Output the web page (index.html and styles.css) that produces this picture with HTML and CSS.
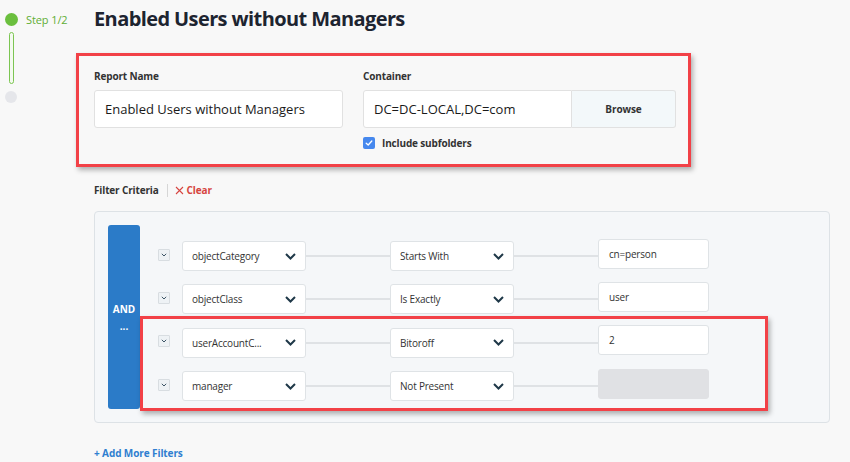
FILE: index.html
```html
<!DOCTYPE html>
<html>
<head>
<meta charset="utf-8">
<link rel="stylesheet" href="styles.css">
</head>
<body>
<div class="page">
  <aside class="stepper">
    <div class="step-row">
      <span class="dot dot-active"></span>
      <span class="step-label">Step 1/2</span>
    </div>
    <div class="step-bar"></div>
    <span class="dot dot-idle"></span>
  </aside>
  <main class="main">
    <h1 class="title">Enabled Users without Managers</h1>

    <section class="report-box">
      <div class="field field-name">
        <label class="label">Report Name</label>
        <div class="input">Enabled Users without Managers</div>
      </div>
      <div class="field field-container">
        <label class="label">Container</label>
        <div class="input-group">
          <div class="input input-grow">DC=DC-LOCAL,DC=com</div>
          <div class="browse">Browse</div>
        </div>
        <div class="check-row">
          <span class="checkbox">
            <svg width="8" height="8" viewBox="0 0 8 8"><path d="M1.2 4.2 L3.2 6 L6.8 2" fill="none" stroke="#fff" stroke-width="1.3" stroke-linecap="round" stroke-linejoin="round"/></svg>
          </span>
          <span class="check-label">Include subfolders</span>
        </div>
      </div>
    </section>

    <div class="filter-head">
      <span class="filter-title">Filter Criteria</span>
      <span class="divider"></span>
      <span class="clear">
        <svg width="9" height="9" viewBox="0 0 9 9"><path d="M1 1 L8 8 M8 1 L1 8" stroke="#d64541" stroke-width="1.1" fill="none"/></svg>
        Clear
      </span>
    </div>

    <div class="panel">
      <div class="and-bar">
        <span class="and-text">AND</span>
        <span class="and-dots">...</span>
      </div>
      <div class="rows">
        <div class="row">
          <span class="toggle"><svg width="6" height="4" viewBox="0 0 6 4"><path d="M0.8 0.8 L3 3 L5.2 0.8" fill="none" stroke="#3d5566" stroke-width="1"/></svg></span>
          <div class="select"><span>objectCategory</span><svg class="chev" width="11" height="7" viewBox="0 0 11 7"><path d="M1 1 L5.5 5.5 L10 1" fill="none" stroke="#1f3848" stroke-width="2"/></svg></div>
          <span class="line"></span>
          <div class="select"><span>Starts With</span><svg class="chev" width="11" height="7" viewBox="0 0 11 7"><path d="M1 1 L5.5 5.5 L10 1" fill="none" stroke="#1f3848" stroke-width="2"/></svg></div>
          <span class="line"></span>
          <div class="value">cn=person</div>
        </div>
        <div class="row">
          <span class="toggle"><svg width="6" height="4" viewBox="0 0 6 4"><path d="M0.8 0.8 L3 3 L5.2 0.8" fill="none" stroke="#3d5566" stroke-width="1"/></svg></span>
          <div class="select"><span>objectClass</span><svg class="chev" width="11" height="7" viewBox="0 0 11 7"><path d="M1 1 L5.5 5.5 L10 1" fill="none" stroke="#1f3848" stroke-width="2"/></svg></div>
          <span class="line"></span>
          <div class="select"><span>Is Exactly</span><svg class="chev" width="11" height="7" viewBox="0 0 11 7"><path d="M1 1 L5.5 5.5 L10 1" fill="none" stroke="#1f3848" stroke-width="2"/></svg></div>
          <span class="line"></span>
          <div class="value">user</div>
        </div>
        <div class="row">
          <span class="toggle"><svg width="6" height="4" viewBox="0 0 6 4"><path d="M0.8 0.8 L3 3 L5.2 0.8" fill="none" stroke="#3d5566" stroke-width="1"/></svg></span>
          <div class="select"><span>userAccountC...</span><svg class="chev" width="11" height="7" viewBox="0 0 11 7"><path d="M1 1 L5.5 5.5 L10 1" fill="none" stroke="#1f3848" stroke-width="2"/></svg></div>
          <span class="line"></span>
          <div class="select"><span>Bitoroff</span><svg class="chev" width="11" height="7" viewBox="0 0 11 7"><path d="M1 1 L5.5 5.5 L10 1" fill="none" stroke="#1f3848" stroke-width="2"/></svg></div>
          <span class="line"></span>
          <div class="value">2</div>
        </div>
        <div class="row">
          <span class="toggle"><svg width="6" height="4" viewBox="0 0 6 4"><path d="M0.8 0.8 L3 3 L5.2 0.8" fill="none" stroke="#3d5566" stroke-width="1"/></svg></span>
          <div class="select"><span>manager</span><svg class="chev" width="11" height="7" viewBox="0 0 11 7"><path d="M1 1 L5.5 5.5 L10 1" fill="none" stroke="#1f3848" stroke-width="2"/></svg></div>
          <span class="line"></span>
          <div class="select"><span>Not Present</span><svg class="chev" width="11" height="7" viewBox="0 0 11 7"><path d="M1 1 L5.5 5.5 L10 1" fill="none" stroke="#1f3848" stroke-width="2"/></svg></div>
          <span class="line"></span>
          <div class="value value-disabled"></div>
        </div>
      </div>
      <div class="highlight"></div>
    </div>

    <a class="add-more">+ Add More Filters</a>
  </main>
</div>
</body>
</html>
```

FILE: styles.css
```css
* { box-sizing: border-box; }
html, body { margin: 0; padding: 0; }
body {
  background: #f8f8f8;
  font-family: "Open Sans", "Noto Sans", sans-serif;
  color: #2b2b2b;
  width: 850px;
  height: 462px;
  overflow: hidden;
}
.page { display: flex; }

.stepper {
  width: 94px;
  padding: 13px 0 0 5px;
  display: flex;
  flex-direction: column;
  align-items: flex-start;
}
.step-row { display: flex; align-items: center; gap: 8px; height: 13px; }
.dot { display: block; width: 13px; height: 13px; border-radius: 50%; }
.dot-active { background: #6bbf3e; }
.dot-idle { background: #e5e6ea; width: 12px; height: 12px; margin-top: 7px; }
.step-label { font-size: 11px; color: #5fae35; line-height: 13px; letter-spacing: -0.1px; }
.step-bar {
  margin: 6px 0 0 4px;
  width: 5px;
  height: 52px;
  border: 1.5px solid #7cc552;
  border-radius: 3px;
  background: #f4faf0;
}

.main { width: 736px; }
.title {
  margin: 5px 0 0;
  font-size: 20px;
  line-height: 28px;
  font-weight: 700;
  letter-spacing: -0.6px;
  color: #1d2430;
}

.report-box {
  margin: 20px 0 0 -18px;
  width: 615px;
  height: 114px;
  border: 3px solid #f24147;
  box-shadow: 2px 3px 5px rgba(0,0,0,0.3);
  background: #f8f8f8;
  padding: 13px 12px 0 15px;
  display: flex;
  gap: 20px;
}
.field { display: flex; flex-direction: column; }
.field-name { width: 249px; }
.field-container { width: 313px; }
.label { font-size: 10px; font-weight: 700; line-height: 14px; color: #333; margin-bottom: 7px; letter-spacing: -0.15px; }
.input {
  height: 38px;
  background: #fff;
  border: 1px solid #e1e1e1;
  border-radius: 3px;
  padding: 0 10px;
  display: flex;
  align-items: center;
  font-size: 13px;
  color: #1a1a1a;
}
.input-group { display: flex; height: 38px; }
.input-grow { flex: 1; border-radius: 3px 0 0 3px; }
.browse {
  width: 104px;
  background: #f3f8fa;
  border: 1px solid #e1e1e1;
  border-left: none;
  border-radius: 0 3px 3px 0;
  display: flex;
  align-items: center;
  justify-content: center;
  font-size: 10px;
  font-weight: 700;
  color: #333;
  letter-spacing: -0.1px;
}
.check-row { display: flex; align-items: center; gap: 7px; margin-top: 8px; }
.checkbox {
  width: 12px; height: 12px;
  border-radius: 2px;
  background: #4688ee;
  display: flex; align-items: center; justify-content: center;
}
.check-label { font-size: 10px; font-weight: 700; color: #333; letter-spacing: -0.15px; }

.filter-head {
  display: flex;
  align-items: center;
  margin-top: 16px;
  height: 14px;
}
.filter-title { font-size: 10px; font-weight: 700; color: #333; letter-spacing: -0.15px; }
.divider { width: 1px; height: 13px; background: #d6d6d6; margin: 0 7px 0 8px; }
.clear { font-size: 10px; font-weight: 700; color: #d64541; display: flex; align-items: center; gap: 3px; letter-spacing: -0.1px; }

.panel {
  position: relative;
  margin-top: 14px;
  height: 212px;
  border: 1px solid #dde2e6;
  border-radius: 4px;
  background: #f5f7f9;
  padding: 13px 0 0 13px;
  display: flex;
}
.and-bar {
  width: 32px;
  height: 184px;
  background: #2b7bc8;
  border-radius: 3px;
  display: flex;
  flex-direction: column;
  align-items: center;
  justify-content: center;
  color: #fff;
  font-size: 10px;
  font-weight: 700;
}
.and-text { margin-top: -2px; }
.and-dots { margin-top: 5px; line-height: 10px; }
.rows {
  display: flex;
  flex-direction: column;
  gap: 13.4px;
  padding: 16px 0 0 18px;
}
.row { display: flex; align-items: center; height: 30px; }
.toggle {
  width: 12px; height: 12px;
  border: 1px solid #d8dde1;
  background: #eef2f5;
  border-radius: 1px;
  display: flex; align-items: center; justify-content: center;
  margin: -3px 12px 0 0;
}
.select {
  width: 124px;
  height: 30px;
  background: #fff;
  border: 1px solid #dfe3e6;
  border-radius: 3px;
  display: flex;
  align-items: center;
  justify-content: space-between;
  padding: 0 9px 0 9px;
  font-size: 10px;
  letter-spacing: -0.2px;
  color: #333;
}
.chev { display: block; }
.line { width: 84px; height: 2px; background: #dfe2e5; }
.value {
  width: 111px;
  height: 30px;
  background: #fff;
  border: 1px solid #dfe3e6;
  border-radius: 3px;
  display: flex;
  align-items: center;
  padding: 0 10px;
  font-size: 10px;
  letter-spacing: -0.2px;
  color: #333;
  margin-bottom: 5px;
}
.value-disabled { background: #e0e1e4; border-color: #e0e1e4; }

.highlight {
  position: absolute;
  left: 45px;
  top: 104px;
  width: 628px;
  height: 95px;
  border: 3px solid #f24147;
  box-shadow: 2px 3px 5px rgba(0,0,0,0.3);
  pointer-events: none;
}

.add-more {
  display: block;
  margin-top: 23px;
  font-size: 10px;
  font-weight: 700;
  letter-spacing: -0.1px;
  color: #2f7fd0;
}
```
